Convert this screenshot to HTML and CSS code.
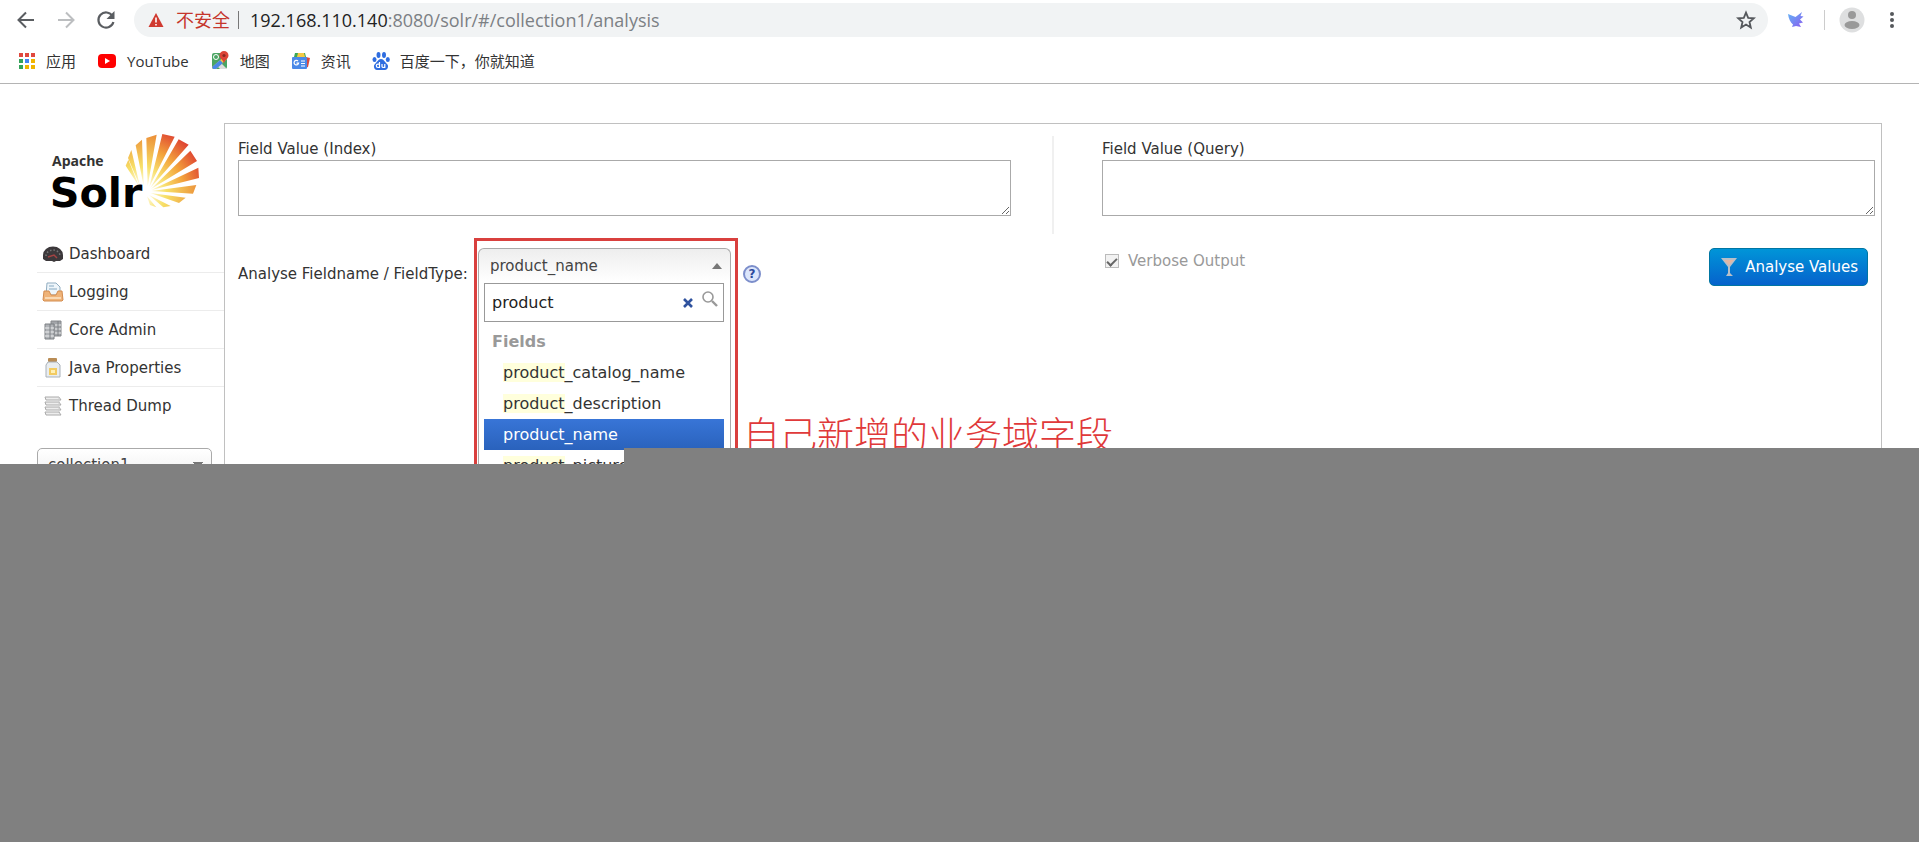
FILE: index.html
```html
<!DOCTYPE html>
<html lang="zh-CN">
<head>
<meta charset="utf-8">
<title>Solr Admin</title>
<link rel="stylesheet" href="styles.css">
</head>
<body>
<header class="browser">
  <div class="toolbar">
    <button class="tool" type="button" aria-label="Back"><svg width="24" height="24" viewBox="0 0 24 24" fill="none" stroke="#5a5d61" stroke-width="2"><path d="M20 12H5M12 4.500L4.500 12l7.500 7.500"/></svg></button>
    <button class="tool" type="button" aria-label="Forward"><svg width="24" height="24" viewBox="0 0 24 24" fill="none" stroke="#bcbec0" stroke-width="2"><path d="M4 12h15M12 4.500l7.500 7.500-7.500 7.500"/></svg></button>
    <button class="tool" type="button" aria-label="Reload"><svg width="24" height="24" viewBox="0 0 24 24"><path d="M18.500 8A7.600 7.600 0 1 0 19.400 14" fill="none" stroke="#5a5d61" stroke-width="2.200"/><path d="M20.500 3v8h-8z" fill="#5a5d61"/></svg></button>
    <div class="omnibox">
      <svg width="16" height="16" viewBox="0 0 16 16"><path d="M8 1l7.500 14H.5z" fill="#d03a30"/><path d="M8 5.500v5M8 12v1.600" stroke="#fff" stroke-width="1.600"/></svg>
      <span class="insecure">不安全</span>
      <span class="bar"></span>
      <span class="url"><span class="host">192.168.110.140</span>:8080/solr/#/collection1/analysis</span>
      <button class="star" type="button" aria-label="Bookmark"><svg width="20" height="20" viewBox="0 0 20 20"><path d="M10 2.600l2.200 5.200 5.600.5-4.300 3.700 1.300 5.500L10 14.600l-4.800 2.900L6.500 12 2.200 8.300l5.600-.5z" fill="none" stroke="#55585c" stroke-width="1.800"/></svg></button>
    </div>
    <button class="tool bird" type="button" aria-label="Extension"><svg width="20" height="20" viewBox="0 0 20 20"><defs><linearGradient id="wing" x1="0" y1="0" x2="1" y2="1"><stop offset="0" stop-color="#62b5f5"/><stop offset="1" stop-color="#8a5cf0"/></linearGradient></defs><path d="M2 4l7.500 3L16 2l-1.500 4 3 .5-3.500 3 3 3-4 1 2 3.500-5-1-4 1 1-2.500C4.500 12.500 2.500 8.500 2 4z" fill="url(#wing)"/></svg></button>
    <span class="split"></span>
    <button class="tool" type="button" aria-label="Profile"><svg width="26" height="26" viewBox="0 0 26 26"><circle cx="13" cy="13" r="12.500" fill="#dedfe0"/><circle cx="13" cy="8" r="4" fill="#999"/><ellipse cx="13" cy="18" rx="7.500" ry="4" fill="#999"/></svg></button>
    <button class="tool dots" type="button" aria-label="Menu"><svg width="6" height="20" viewBox="0 0 6 20" fill="#55585c"><circle cx="3" cy="4" r="2"/><circle cx="3" cy="10" r="2"/><circle cx="3" cy="16" r="2"/></svg></button>
  </div>
  <nav class="bookmarks">
    <a href="#"><svg width="18" height="18" viewBox="0 0 18 18"><g fill="#e0483e"><path d="M1 1h4v4H1zM7 1h4v4H7zM13 1h4v4h-4z"/></g><path d="M1 7h4v4H1z" fill="#35a35a"/><path d="M7 7h4v4H7z" fill="#4285f4"/><path d="M13 7h4v4h-4z" fill="#f0b400"/><path d="M1 13h4v4H1z" fill="#35a35a"/><path d="M7 13h4v4H7zM13 13h4v4h-4z" fill="#f0b400"/></svg>应用</a>
    <a href="#"><svg width="20" height="18" viewBox="0 0 20 18"><rect x="1" y="2" width="18" height="14" rx="4" fill="#f00"/><path d="M8 6v6l5-3z" fill="#fff"/></svg>YouTube</a>
    <a href="#"><svg width="20" height="20" viewBox="0 0 20 20"><rect x="2" y="2" width="15" height="16" rx="2" fill="#4aa564"/><path d="M9 10l8 8h-7l-4-4z" fill="#ddd"/><path d="M2 16L16 4h1v4L6 18H3z" fill="#f7ca45"/><path d="M2 16l8-7 3 3-7 6H3z" fill="#4a89e8"/><circle cx="6" cy="6" r="2.500" fill="none" stroke="#fff"/><path d="M14 13c0-4-4.500-5-4.500-8.500a4.500 4.500 0 0 1 9 0C18.500 8 14 9 14 13z" fill="#dc4437"/><circle cx="14" cy="4.500" r="1.600" fill="#8c2a22"/></svg>地图</a>
    <a href="#"><svg width="20" height="20" viewBox="0 0 20 20"><path d="M3 6l1-4h10l1 4z" fill="#3aa757"/><path d="M7 2h6l1 4H6z" fill="#f6c945"/><path d="M15 6l4 1-2 9-3 1z" fill="#db4a3d"/><rect x="1" y="6" width="15" height="12" rx="1" fill="#4a89e8"/><path d="M7 10a2.300 2.300 0 1 0 .6 2.200H5.500M10 10h4M10 12.500h4M10 15h4" fill="none" stroke="#fff" stroke-width="1.200"/></svg>资讯</a>
    <a href="#"><svg width="18" height="20" viewBox="0 0 18 20" fill="#2f6de0"><ellipse cx="6.500" cy="4" rx="2" ry="3"/><ellipse cx="12" cy="4" rx="2" ry="3"/><ellipse cx="2.500" cy="8.500" rx="2" ry="2.600"/><ellipse cx="15.800" cy="8.500" rx="2" ry="2.600"/><path d="M9 8c3 0 4 3.500 6 5s1 6-2 6H5c-3 0-4-4.500-2-6s3-5 6-5z"/><path d="M7.500 11v5.500H6a1.600 1.600 0 0 1 0-3.400h1.500M10 13v2.500c0 1.300 2.800 1.300 2.800 0V13v4" fill="none" stroke="#fff" stroke-width="1.200"/></svg>百度一下，你就知道</a>
  </nav>
</header>

<div class="page">
  <aside class="sidebar">
    <a class="logo" href="#" aria-label="Apache Solr">
      <svg width="160" height="84" viewBox="70 58 480 252">
        <defs><radialGradient id="sun" gradientUnits="userSpaceOnUse" cx="365" cy="245" r="205"><stop offset=".12" stop-color="#fffbe0"/><stop offset=".35" stop-color="#f8e070"/><stop offset=".62" stop-color="#f3a43c"/><stop offset="1" stop-color="#dc3730"/></radialGradient>
        <radialGradient id="side" gradientUnits="userSpaceOnUse" cx="365" cy="245" r="190"><stop offset=".1" stop-color="#fffbe0"/><stop offset=".4" stop-color="#f7df66"/><stop offset="1" stop-color="#ea8130"/></radialGradient></defs>
        <g fill="url(#side)"><path d="M318 168l8-18 32 80zM325 145l10-24 26 109zM348 107l19-17 5 140zM380 85l31-10-27 155zM395 244l135-18-10 26zM392 250l106 14-20 16zM388 256l65 33-22 4zM382 260l28 33-19-7z"/></g>
        <g fill="url(#sun)"><path d="M428 73l37 8-76 150zM477 89l30 16-115 130zM512 123l20 31-138 84zM536 174l2 31-143 36z"/></g>
        <text><tspan class="logo-top" x="97" y="168">Apache</tspan><tspan class="logo-main" x="90" y="291">Solr</tspan></text>
      </svg>
    </a>
    <nav class="menu">
      <a href="#"><svg width="20" height="20" viewBox="0 0 20 20"><path d="M0 15V11a10 8.500 0 0 1 20 0v4l-3 2h-4l-2 1-2-1H3z" fill="#3c383b"/><path d="M3 12a7 6 0 0 1 14 0" fill="none" stroke="#777" stroke-width="1.500" stroke-dasharray="1.500 2"/><path d="M5 13l6-2 3 3" fill="none" stroke="#a34343" stroke-width="1.500"/></svg>Dashboard</a>
      <a href="#"><svg width="20" height="20" viewBox="0 0 20 20"><path d="M4 1h9l4 4v8H3z" fill="#eef5fa" stroke="#91adc1"/><path d="M6 4h5M6 7h8" stroke="#86a9c2"/><path d="M1 9h5l2 4h5l2-4h4l1 9-1 1H1l-1-1z" fill="#efb378" stroke="#d38c4f"/><path d="M2 16h16" stroke="#f9d9b4" stroke-width="2"/></svg>Logging</a>
      <a href="#"><svg width="20" height="20" viewBox="0 0 20 20"><path d="M8 1h10v15H8z" fill="#a2a5a9" stroke="#85888c"/><path d="M2 4h9v15H2z" fill="#b0b3b7" stroke="#7d8084"/><path d="M2 8h9M2 12h9M2 16h9M12 5h6M12 9h6M12 13h6" stroke="#eeeff0"/><path d="M7 4v15M15 1v15" stroke="#7d8084"/></svg>Core Admin</a>
      <a href="#"><svg width="20" height="20" viewBox="0 0 20 20"><rect x="5" y="0" width="9" height="4" rx="1" fill="#b98c55"/><path d="M5 4h9l3 3v12H3V7z" fill="#e9edf0" stroke="#a9b1b9"/><path d="M6 10h8v7H6z" fill="#f2cb62"/><path d="M8 12h4v3H8z" fill="#fff0b5"/></svg>Java Properties</a>
      <a href="#"><svg width="20" height="20" viewBox="0 0 20 20" fill="#ededed" stroke="#aaa"><path d="M2 1h14l2 3H3zM2 6h14l2 3H3zM2 11h14l2 3H3zM2 16h14l2 3H3z"/><path d="M16 1v15" stroke="#ccc"/></svg>Thread Dump</a>
    </nav>
    <select class="core" aria-label="Core"><option>collection1</option></select>
  </aside>

  <main class="panel">
    <form class="analysis">
      <div class="fields">
        <div class="field">
          <label for="index-value">Field Value (Index)</label>
          <textarea id="index-value"></textarea>
        </div>
        <div class="field query">
          <label for="query-value">Field Value (Query)</label>
          <textarea id="query-value"></textarea>
        </div>
      </div>
      <div class="options">
        <div class="type">
          <label for="type-search">Analyse Fieldname / FieldType:</label>
          <div class="picker">
            <button class="current" type="button">product_name<span class="up"></span></button>
            <div class="drop">
              <div class="search">
                <input id="type-search" type="text" value="product">
                <button type="button" aria-label="Clear"><svg width="12" height="12" viewBox="0 0 12 12"><path d="M2 2l8 8M10 2l-8 8" stroke="#2f529e" stroke-width="2.600"/></svg></button>
                <svg class="lens" width="18" height="18" viewBox="0 0 18 18" fill="none" stroke="#999"><circle cx="7" cy="7" r="5" stroke-width="1.600"/><path d="M11 11l5 5" stroke-width="2.400"/></svg>
              </div>
              <ul class="results">
                <li class="group">Fields</li>
                <li><em>product</em>_catalog_name</li>
                <li><em>product</em>_description</li>
                <li class="active"><em>product</em>_name</li>
                <li><em>product</em>_picture</li>
              </ul>
            </div>
            <div class="marker"></div>
            <p class="remark">自己新增的业务域字段</p>
          </div>
          <a class="help" href="#" aria-label="Help">?</a>
        </div>
        <div class="run">
          <label class="verbose"><input type="checkbox" checked>Verbose Output</label>
          <button class="submit" type="submit"><svg width="18" height="20" viewBox="0 0 18 20"><path d="M1 1h16l-7 9v6l3 3H6l2-3v-6z" fill="#b9bfc8"/><path d="M4 3h10l-5 5z" fill="#e4b6a2"/></svg>Analyse Values</button>
        </div>
      </div>
    </form>
  </main>
</div>
<div class="cover"></div>
</body>
</html>
```
FILE: styles.css
```css
* { box-sizing: border-box; }

body {
  margin: 0;
  height: 100vh;
  overflow: hidden;
  position: relative;
  display: flex;
  flex-direction: column;
  background: #fff;
  color: #333;
  font: 15px/20px "DejaVu Sans", "Noto Sans CJK SC", sans-serif;
}

button { font: inherit; border: 0; padding: 0; background: none; }
a { color: inherit; text-decoration: none; }
svg { display: block; flex: none; overflow: visible; }

/* Browser chrome */
.browser {
  height: 84px;
  border-bottom: 1px solid #b4b4b4;
  font-family: "Open Sans", "Noto Sans CJK SC", sans-serif;
}
.toolbar { display: flex; align-items: center; height: 40px; padding: 0 24px 0 14px; }
.tool { flex: none; margin-right: 16px; }
.omnibox {
  flex: 1;
  display: flex;
  align-items: center;
  height: 34px;
  padding: 0 12px 0 14px;
  border-radius: 17px;
  background: #f1f3f4;
  font-size: 18px;
}
.insecure { margin-left: 12px; color: #c5352b; }
.bar { width: 1px; height: 18px; margin: 0 11px 0 8px; background: #777; }
.url { flex: 1; color: #7c8084; }
.host { color: #222; }
.bird { margin: 0 18px; }
.split { width: 1px; height: 20px; margin-right: 14px; background: #ccc; }
.dots { margin: 0 0 0 8px; }
.bookmarks { display: flex; align-items: center; gap: 21px; height: 42px; padding-left: 18px; font-size: 15px; }
.bookmarks a { display: flex; align-items: center; gap: 10px; }

/* Admin page */
.page { flex: 1; display: flex; padding: 39px 37px 0 37px; }
.sidebar { width: 187px; flex: none; }
.logo { display: block; height: 112px; padding: 6px 0 0 6px; }
.logo-top { font: bold 42px "Open Sans", sans-serif; fill: #333; }
.logo-main { font: bold 124px "DejaVu Sans", sans-serif; fill: #000; }
.menu a {
  display: flex;
  align-items: center;
  gap: 6px;
  height: 38px;
  padding-left: 6px;
  border-bottom: 1px solid #ececec;
}
.menu a:last-child { border-bottom: 0; }
.core {
  appearance: none;
  width: 175px;
  height: 34px;
  margin-top: 23px;
  padding: 0 10px;
  border: 1px solid #aaa;
  border-radius: 5px;
  color: #444;
  font: inherit;
  background:
    conic-gradient(from -45deg at 50% 100%, #777 90deg, transparent 0) no-repeat right 8px top 13px / 10px 5px,
    linear-gradient(#fff, #eee);
}

.panel { flex: 1; min-width: 0; border: 1px solid #c0c0c0; }
.analysis { padding: 12px 6px 0 13px; }
.fields, .options { display: grid; grid-template-columns: 1fr 1fr; column-gap: 91px; }
.fields {
  height: 98px;
  padding-top: 3px;
  background: linear-gradient(#f0f0f0, #f0f0f0) no-repeat calc(50% - 4px) 0 / 2px 100%;
}
.field { display: flex; flex-direction: column; }
.field label { line-height: 21px; }
.field textarea { height: 56px; border: 1px solid #aaa; background: #fff; resize: vertical; }

.options { padding-top: 14px; }
.type { display: flex; align-items: flex-start; white-space: nowrap; }
.type label { width: 240px; line-height: 52px; }
.picker { position: relative; width: 253px; }
.current {
  display: flex;
  align-items: center;
  justify-content: space-between;
  width: 100%;
  height: 34px;
  padding: 0 8px 0 11px;
  border: 1px solid #aaa;
  border-bottom: 0;
  border-radius: 6px 6px 0 0;
  background: linear-gradient(#eee, #fff);
  color: #444;
}
.up { border: 5px solid transparent; border-top: 0; border-bottom: 6px solid #777; }
.drop {
  position: absolute;
  top: 34px;
  left: 0;
  right: 0;
  height: 220px;
  padding: 1px 6px 0 5px;
  border: 1px solid #aaa;
  border-top: 0;
  background: #fff;
}
.search { display: flex; align-items: center; height: 39px; padding: 0 4px 0 7px; border: 1px solid #999; }
.search input { flex: 1; min-width: 0; border: 0; padding: 0; outline: 0; color: #222; font: 16px "DejaVu Sans", sans-serif; }
.lens { margin: 0 0 8px 7px; }
.results { margin: 4px 0 0; padding: 0; list-style: none; font-size: 16px; }
.results li { padding-left: 19px; line-height: 31px; }
.results .group { padding-left: 8px; color: #999; font-weight: bold; }
.results em { font-style: normal; background: #ffffdc; }
.results .active { color: #fff; background: linear-gradient(#3875d7, #2a62bc); }
.results .active em { background: none; }
.marker {
  position: absolute;
  top: -10px;
  left: -4px;
  right: -7px;
  height: 300px;
  border: 3px solid #d9403e;
  pointer-events: none;
}
.remark { position: absolute; top: 158px; left: 265px; margin: 0; color: #e0393a; font: 300 37px/54px "Noto Sans CJK SC", sans-serif; }
.help {
  width: 18px;
  height: 18px;
  margin: 17px 0 0 12px;
  border: 2px solid #7c8ecb;
  border-radius: 50%;
  background: #dce6fb;
  color: #2c4a9c;
  font-size: 12px;
  font-weight: bold;
  line-height: 14px;
  text-align: center;
}
.run { display: flex; align-items: flex-start; justify-content: space-between; padding: 0 7px 0 3px; }
.verbose { display: flex; align-items: center; gap: 9px; height: 26px; color: #999; }
.verbose input {
  appearance: none;
  width: 14px;
  height: 14px;
  margin: 0;
  border: 1px solid #bbb;
  background: #f2f2f2;
  display: grid;
  place-items: center;
}
.verbose input::before { content: ""; width: 8px; height: 4px; border: solid #666; border-width: 0 0 2px 2px; transform: rotate(-45deg); }
.submit {
  display: flex;
  align-items: center;
  gap: 7px;
  height: 38px;
  padding: 0 9px 0 10px;
  border: 1px solid #0076a3;
  border-radius: 5px;
  background: linear-gradient(#0095d8, #0662cc);
  color: #fff;
}

/* Grey area over the lower part, with one raised step on the right */
.cover {
  position: absolute;
  inset: 448px 0 0;
  background: #808080;
  clip-path: polygon(0 16px, 624px 16px, 624px 0, 100% 0, 100% 100%, 0 100%);
}
```
